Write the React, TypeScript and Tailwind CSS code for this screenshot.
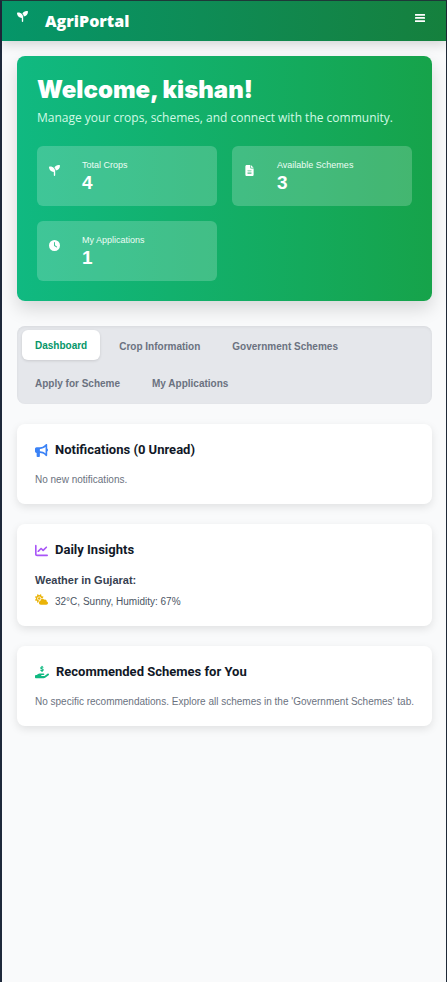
import type { ReactNode } from "react";
import {
  FaBullhorn,
  FaChartLine,
  FaClock,
  FaCloudSun,
  FaFileLines,
  FaHandHoldingDollar,
  FaSeedling,
} from "react-icons/fa6";

const stats = [
  { label: "Total Crops", value: 4, icon: <FaSeedling size={11} /> },
  { label: "Available Schemes", value: 3, icon: <FaFileLines size={11} /> },
  { label: "My Applications", value: 1, icon: <FaClock size={11} /> },
];

const tabs = [
  "Dashboard",
  "Crop Information",
  "Government Schemes",
  "Apply for Scheme",
  "My Applications",
];

function MenuIcon() {
  return (
    <svg width="10" height="8" viewBox="0 0 10 8" fill="currentColor" aria-hidden="true">
      <rect y="0" width="10" height="1.7" rx="0.3" />
      <rect y="3.1" width="10" height="1.7" rx="0.3" />
      <rect y="6.3" width="10" height="1.7" rx="0.3" />
    </svg>
  );
}

function Card({ icon, title, children }: { icon: ReactNode; title: string; children: ReactNode }) {
  return (
    <section className="rounded-lg bg-white px-[18px] pt-4 pb-[17px] shadow-[0_3px_8px_rgba(0,0,0,0.10)]">
      <h2 className="mb-3 flex items-center gap-[7px] font-[Roboto,sans-serif] text-[13px] leading-5 font-bold text-[#111827]">
        {icon}
        {title}
      </h2>
      {children}
    </section>
  );
}

export default function App() {
  return (
    <div className="min-h-screen border-t border-r border-l-2 border-t-[#1f3a3a] border-r-[#1f2937] border-l-[#1e293b] bg-[#f9fafb] font-['Liberation_Sans',Arial,sans-serif]">
      <header className="flex h-10 items-start justify-between bg-linear-to-r from-[#059669] to-[#15803d] pr-[21px] pl-[15px] text-white shadow-[0_4px_10px_rgba(0,0,0,0.14)]">
        <div className="flex items-start gap-[17px]">
          <FaSeedling size={11} className="mt-[10px]" />
          <span className="mt-[10px] font-['Open_Sans',sans-serif] text-[16px] leading-5 font-extrabold">
            AgriPortal
          </span>
        </div>
        <button type="button" aria-label="Open menu" className="mt-[13px]">
          <MenuIcon />
        </button>
      </header>

      <main className="pt-[15px] pr-[14px] pb-5 pl-[15px]">
        <section className="rounded-lg bg-linear-to-r from-[#10b981] to-[#16a34a] p-5 text-white shadow-[0_8px_18px_rgba(0,0,0,0.14)]">
          <h1 className="font-['Inter',sans-serif] text-[24px] leading-7 font-black">
            Welcome, kishan!
          </h1>
          <p className="mt-[6px] font-['Open_Sans',sans-serif] text-[12px] leading-4 text-[#d1fae5]">
            Manage your crops, schemes, and connect with the community.
          </p>
          <div className="mt-5 grid grid-cols-2 gap-[15px]">
            {stats.map((s) => (
              <div key={s.label} className="flex h-[60px] items-start rounded-md bg-white/20 px-3 pt-[13px]">
                <span className="mt-[6px] w-[33px] shrink-0">{s.icon}</span>
                <div>
                  <p className="text-[9px] leading-3 text-[#ecfdf5]">{s.label}</p>
                  <p className="text-[19px] leading-6 font-bold">{s.value}</p>
                </div>
              </div>
            ))}
          </div>
        </section>

        <nav className="mt-[25px] flex flex-wrap gap-x-[6px] gap-y-[7px] rounded-lg bg-[#e5e7eb] px-[5px] pt-1 pb-[7px] shadow-[inset_0_1px_3px_rgba(0,0,0,0.06)]">
          {tabs.map((t, i) => (
            <button
              key={t}
              type="button"
              className={
                i === 0
                  ? "h-[30px] rounded-md bg-white px-[13px] text-[10px] font-bold text-[#059669] shadow-[0_1px_3px_rgba(0,0,0,0.12)]"
                  : "h-[30px] rounded-md px-[13px] pt-[2px] text-[10px] font-bold text-[#6b7280]"
              }
            >
              {t}
            </button>
          ))}
        </nav>

        <div className="mt-5 flex flex-col gap-5">
          <Card icon={<FaBullhorn size={13} className="text-[#3b82f6]" />} title="Notifications (0 Unread)">
            <p className="text-[10px] leading-[15px] text-[#6b7280]">No new notifications.</p>
          </Card>
          <Card icon={<FaChartLine size={13} className="text-[#a855f7]" />} title="Daily Insights">
            <h3 className="text-[11px] leading-4 font-bold text-[#374151]">Weather in Gujarat:</h3>
            <p className="mt-[6px] flex items-start gap-[7px] text-[10px] leading-[15px] text-[#4b5563]">
              <FaCloudSun size={13} className="-mt-px text-[#eab308]" />
              32°C, Sunny, Humidity: 67%
            </p>
          </Card>
          <Card icon={<FaHandHoldingDollar size={14} className="text-[#10b981]" />} title="Recommended Schemes for You">
            <p className="text-[10px] leading-[15px] text-[#6b7280]">
              No specific recommendations. Explore all schemes in the 'Government Schemes' tab.
            </p>
          </Card>
        </div>
      </main>
    </div>
  );
}
